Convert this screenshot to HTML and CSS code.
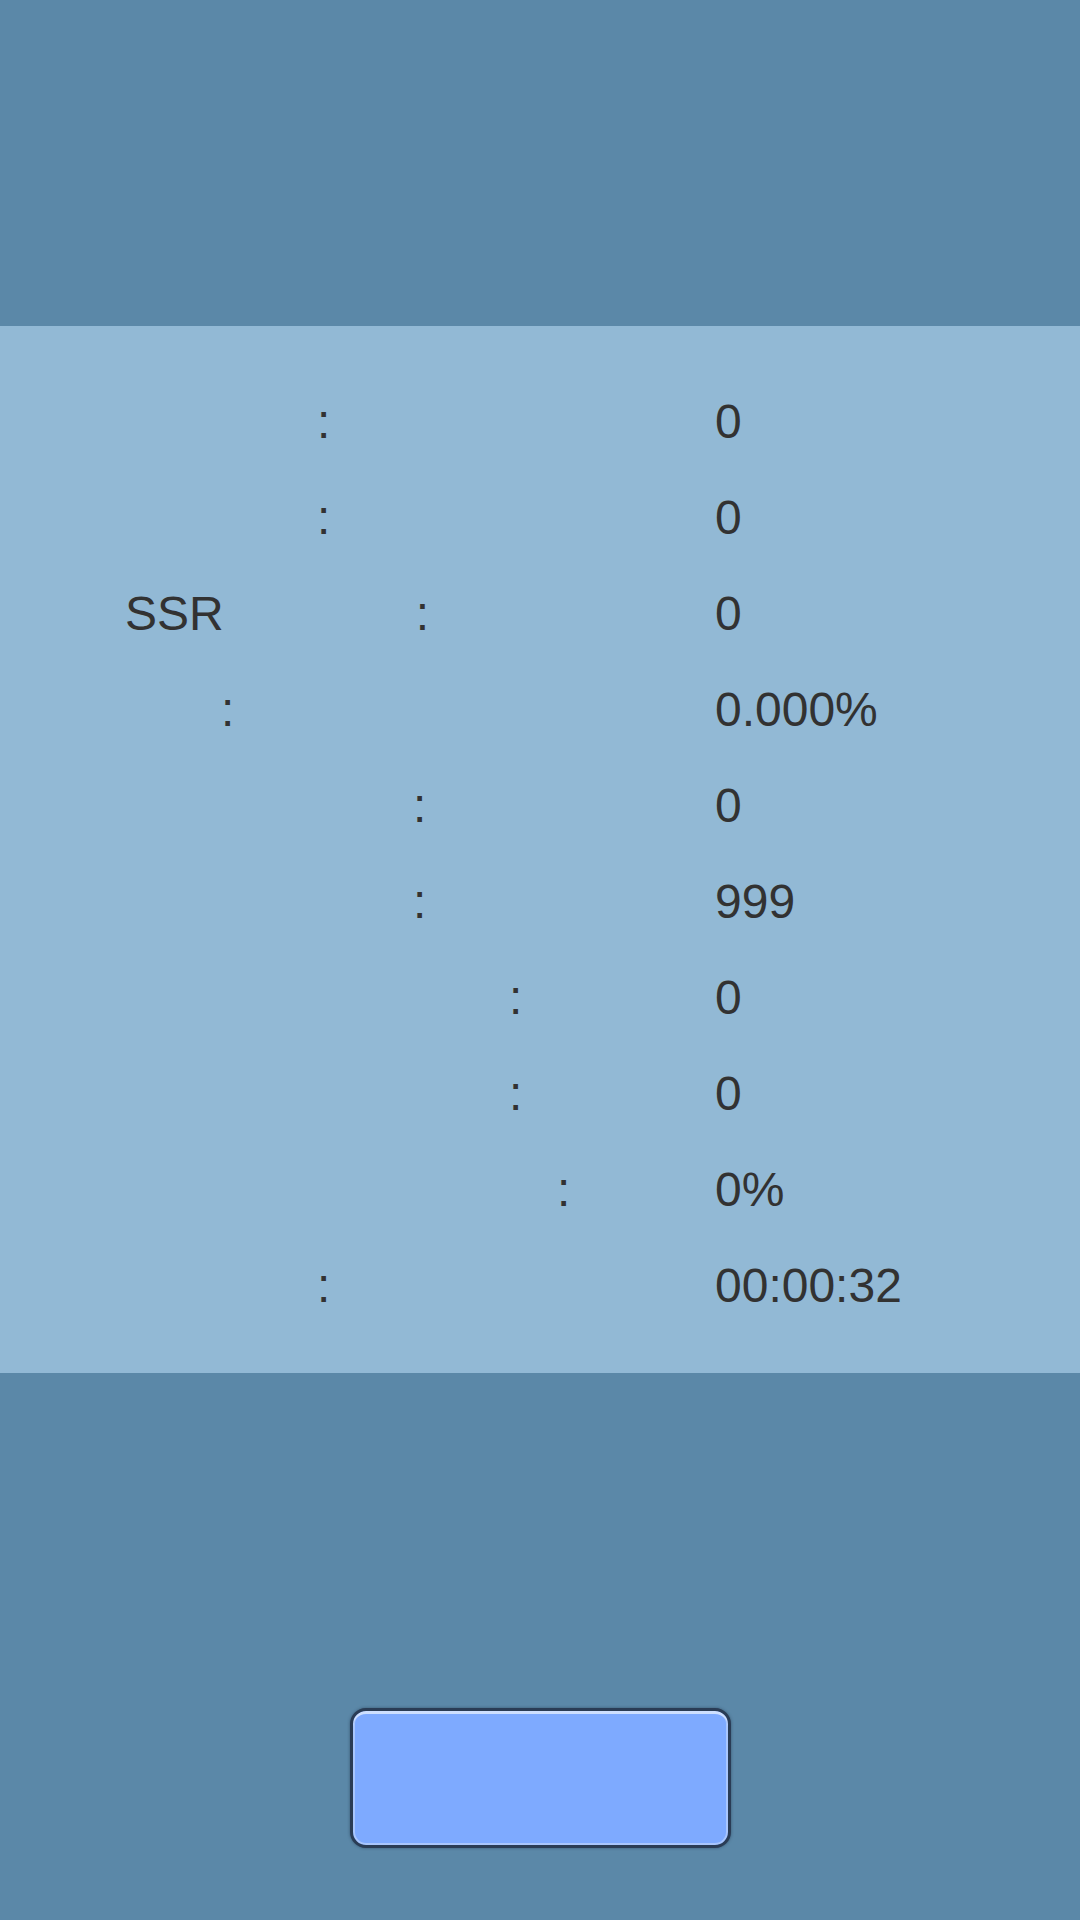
FILE: index.html
```html
<!DOCTYPE html>
<html lang="en">
<head>
    <meta charset="UTF-8">
    <meta name="viewport" content="width=device-width, initial-scale=1.0">
    <title>Stats</title>
    <link rel="stylesheet" href="styles.css">
</head>
<body>
    <header class="top-bar"></header>
    <main class="stats">
        <div class="row"><span class="label"><span class="blank w4"></span>:</span><span class="value">0</span></div>
        <div class="row"><span class="label"><span class="blank w4"></span>:</span><span class="value">0</span></div>
        <div class="row"><span class="label">SSR<span class="blank w4"></span>:</span><span class="value">0</span></div>
        <div class="row"><span class="label"><span class="blank w2"></span>:</span><span class="value">0.000%</span></div>
        <div class="row"><span class="label"><span class="blank w6"></span>:</span><span class="value">0</span></div>
        <div class="row"><span class="label"><span class="blank w6"></span>:</span><span class="value">999</span></div>
        <div class="row"><span class="label"><span class="blank w8"></span>:</span><span class="value">0</span></div>
        <div class="row"><span class="label"><span class="blank w8"></span>:</span><span class="value">0</span></div>
        <div class="row"><span class="label"><span class="blank w9"></span>:</span><span class="value">0%</span></div>
        <div class="row"><span class="label"><span class="blank w4"></span>:</span><span class="value" id="timer">00:00:32</span></div>
    </main>
    <footer class="bottom">
        <button class="action"></button>
    </footer>
</body>
</html>
```

FILE: styles.css
```css
html, body {
    height: 100%;
}
body {
    margin: 0;
    padding: 0;
    display: flex;
    flex-direction: column;
    background-color: #5b88a8;
    font-family: "Liberation Sans", Arial, sans-serif;
    color: #323232;
}
.top-bar {
    height: 326px;
    flex: none;
}
.stats {
    background-color: #92b9d5;
    padding: 48px 0 39px 125px;
    font-size: 48px;
}
.row {
    display: grid;
    grid-template-columns: 590px 1fr;
    height: 96px;
    line-height: 96px;
    white-space: nowrap;
}
.blank {
    display: inline-block;
}
.w2 { width: 2em; }
.w4 { width: 4em; }
.w6 { width: 6em; }
.w8 { width: 8em; }
.w9 { width: 9em; }
.bottom {
    flex: 1;
    display: flex;
    justify-content: center;
    align-items: flex-end;
    padding-bottom: 72px;
}
.action {
    width: 381px;
    height: 140px;
    margin-left: 1px;
    background-color: #7eaaff;
    border: 3px solid #2a3c55;
    border-radius: 16px;
    box-shadow: inset 0 3px 0 #cddfff, inset 0 0 0 2px #a9c6fd, 0 0 3px rgba(20, 35, 55, 0.5);
    cursor: pointer;
}
```
